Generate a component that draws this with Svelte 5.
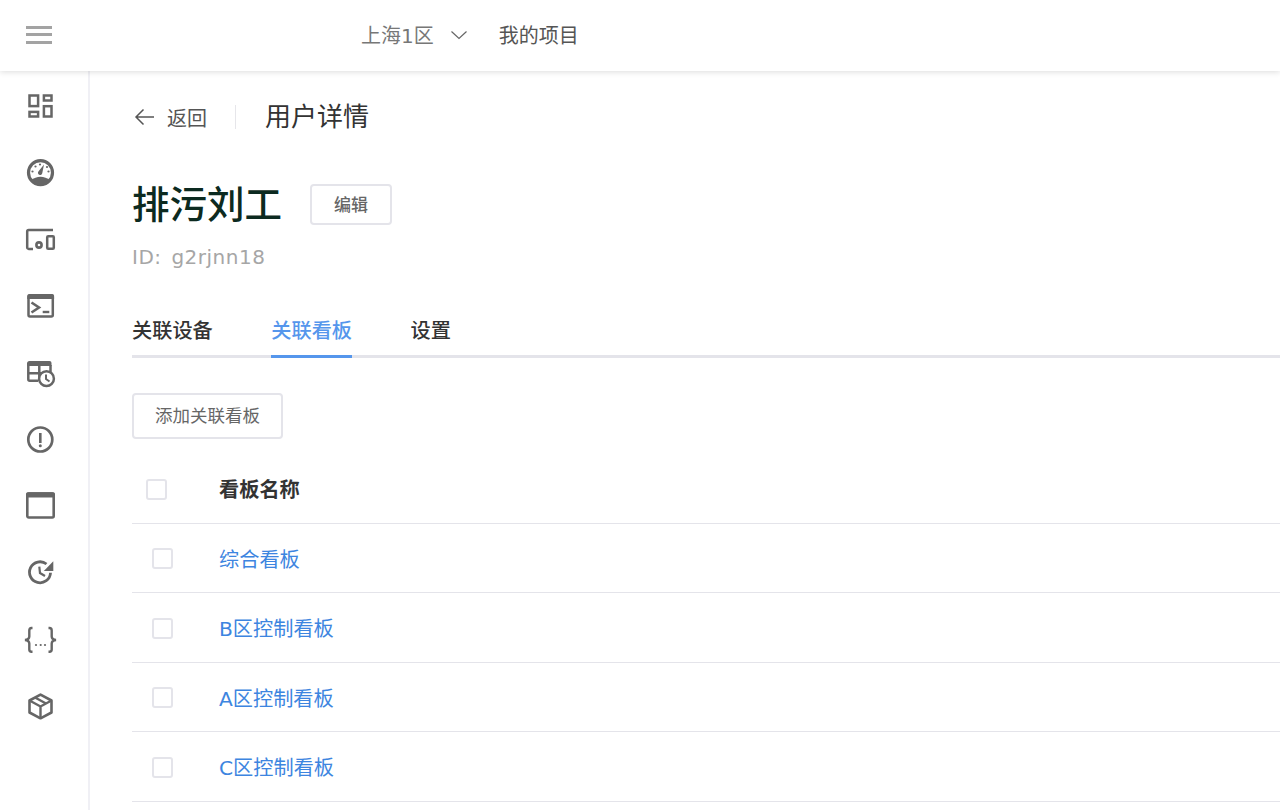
<script lang="ts">
	const boards = ['综合看板', 'B区控制看板', 'A区控制看板', 'C区控制看板'];
	const tabs = ['关联设备', '关联看板', '设置'];
	let activeTab = $state(1);
</script>

<div class="app">
	<header class="topbar">
		<button class="menu" aria-label="菜单">
			<span></span><span></span><span></span>
		</button>
		<div class="region">
			<span>上海1区</span>
			<svg width="18" height="10" viewBox="0 0 18 10" fill="none" stroke="#666" stroke-width="1.2"><path d="M1.500 1.500 9 8.500l7.500-7" /></svg>
		</div>
		<span class="project">我的项目</span>
	</header>

	<div class="body">
		<nav class="sidebar">
			<!-- dashboard -->
			<svg viewBox="0 0 32 32">
				<rect x="5.500" y="5.500" width="8.600" height="10.600" />
				<rect x="19.900" y="5.500" width="7.600" height="5" />
				<rect x="19.900" y="16.200" width="7.600" height="10.300" />
				<rect x="5.500" y="21.900" width="8.600" height="4.600" />
			</svg>
			<!-- gauge -->
			<svg viewBox="0 0 32 32">
				<circle cx="16.500" cy="15.700" r="12" stroke-width="3.200" />
				<path class="solid" d="M6.500 23.500Q16.500 16 26.500 23.500L22 28H11z" />
				<path class="solid" d="M20 7.500 18.300 16a2.200 2.200 0 1 1-3.900-1.600z" />
				<circle class="solid" cx="11.500" cy="9.500" r="1.100" />
				<circle class="solid" cx="8.500" cy="14.500" r="1.100" />
				<circle class="solid" cx="24.500" cy="14.500" r="1.100" />
				<circle class="solid" cx="23" cy="10" r="1.100" />
				<circle class="solid" cx="16" cy="7.500" r="1.100" />
			</svg>
			<!-- devices -->
			<svg viewBox="0 0 32 32">
				<path d="M29 5.900H4.700a1.500 1.500 0 0 0-1.500 1.500v16a1.500 1.500 0 0 0 1.500 1.500H9" />
				<rect x="23.200" y="12.200" width="6.600" height="12.600" rx="1" />
				<circle cx="15" cy="21" r="2.600" stroke-width="2.600" />
			</svg>
			<!-- terminal -->
			<svg viewBox="0 0 32 32">
				<rect x="4.500" y="5.500" width="24.300" height="21" rx="1.500" />
				<path class="solid" d="M3.300 6a2 2 0 0 1 2-2h22.800a2 2 0 0 1 2 2v3H3.300z" />
				<path d="M7.500 12.500 15 17.500l-7.500 5" stroke-width="2.600" />
				<path class="solid" d="M18.700 20.800h6.600v2.400h-6.600z" />
			</svg>
			<!-- table clock -->
			<svg viewBox="0 0 32 32">
				<path d="M14 23.800H5.800a1.500 1.500 0 0 1-1.500-1.500V5.500M26.500 8v8M4.500 16.300h22M15.300 8v16" />
				<path class="solid" d="M3.300 6a2 2 0 0 1 2-2h20.200a2 2 0 0 1 2 2v3H3.300z" />
				<circle class="clock" cx="22.500" cy="21.700" r="7.400" stroke-width="2.500" />
				<path d="M22 17.500v4.500l3.500 2.500" stroke-width="2" />
			</svg>
			<!-- alert -->
			<svg viewBox="0 0 32 32">
				<circle cx="16.300" cy="15.500" r="12" stroke-width="2.700" />
				<path class="solid" d="M15 9h2.600v10H15z" />
				<circle class="solid" cx="16.300" cy="21.700" r="1.500" />
			</svg>
			<!-- window -->
			<svg viewBox="0 0 32 32">
				<rect x="3.300" y="3.500" width="26.400" height="24" rx="1.500" stroke-width="2.600" />
				<path class="solid" d="M2 4.300a2 2 0 0 1 2-2h25a2 2 0 0 1 2 2v3.200H2z" />
			</svg>
			<!-- history -->
			<svg viewBox="0 0 32 32">
				<path d="M26.500 15.700A10.500 10.500 0 1 1 22.500 7" stroke-width="2.800" />
				<path class="solid" d="M29.300 4.200v9.800H19.800z" />
				<path d="M15.300 9.700 16 16l5 3" stroke-width="2.200" />
			</svg>
			<!-- braces -->
			<svg viewBox="0 0 32 32">
				<path d="M8.500 4H7.500Q5.300 4 5.300 6.500V12.500Q5.300 15.500 1 16 5.300 16.500 5.300 19.500V25.500Q5.300 27.700 7.500 27.700H8.500" stroke-width="2.400" />
				<path d="M24.500 4H25.500Q27.700 4 27.700 6.500V12.500Q27.700 15.500 32 16 27.700 16.500 27.700 19.500V25.500Q27.700 27.700 25.500 27.700H24.500" stroke-width="2.400" />
				<circle class="solid" cx="12" cy="21" r="1.100" />
				<circle class="solid" cx="16.700" cy="21" r="1.100" />
				<circle class="solid" cx="21" cy="21" r="1.100" />
			</svg>
			<!-- box -->
			<svg viewBox="0 0 32 32">
				<path d="M16.500 4.600 27.500 10.500V22.500L16.500 28.300 5.500 22.500V10.500z" stroke-linejoin="round" stroke-width="2.600" />
				<path d="M5.500 10.500 16.500 16.500 27.500 10.500M16.500 16.500V28M11 7.500 22 13.500" stroke-width="2.400" />
			</svg>
		</nav>

		<main class="content">
			<div class="crumbs">
				<a class="back" href="#back">
					<svg width="22" height="18" viewBox="0 0 22 18" fill="none" stroke="#555" stroke-width="1.500"><path d="M9.500 1.500 2 9l7.500 7.500M2 9h18" /></svg>
					<span>返回</span>
				</a>
				<i class="sep"></i>
				<span class="crumb-title">用户详情</span>
			</div>

			<div class="title-row">
				<h1>排污刘工</h1>
				<button class="btn edit">编辑</button>
			</div>
			<p class="id">ID: g2rjnn18</p>

			<div class="tabs">
				{#each tabs as tab, i}
					<button class="tab" class:active={activeTab === i} onclick={() => (activeTab = i)}>{tab}</button>
				{/each}
			</div>

			<button class="btn add">添加关联看板</button>

			<div class="table">
				<div class="row head">
					<span class="check"></span>
					<span class="name">看板名称</span>
				</div>
				{#each boards as board}
					<div class="row">
						<span class="check"></span>
						<a class="name" href="#board">{board}</a>
					</div>
				{/each}
			</div>
		</main>
	</div>
</div>

<style>
	:global(body) {
		margin: 0;
		background: #fff;
		font-family: 'DejaVu Sans', 'Noto Sans CJK SC', sans-serif;
		color: #333;
		overflow: hidden;
	}

	.app {
		height: 810px;
		display: flex;
		flex-direction: column;
		overflow: hidden;
	}

	.topbar {
		flex: none;
		height: 71px;
		box-sizing: border-box;
		padding-bottom: 2px;
		display: flex;
		align-items: center;
		position: relative;
		background: #fff;
		box-shadow: 0 1px 6px rgba(0, 0, 0, 0.14);
	}

	.menu {
		width: 26px;
		padding: 0;
		margin-left: 26px;
		display: grid;
		gap: 4.500px;
		border: 0;
		background: none;
	}

	.menu span {
		height: 3px;
		background: #a3a3a3;
	}

	.region {
		margin-left: 309px;
		display: flex;
		align-items: center;
		gap: 16px;
		font-size: 20px;
		color: #777;
	}

	.project {
		margin-left: 31px;
		font-size: 20px;
		color: #555;
	}

	.body {
		flex: 1;
		display: flex;
		min-height: 0;
	}

	.sidebar {
		flex: none;
		width: 90px;
		box-sizing: border-box;
		padding: 2px 8px 0 0;
		border-right: 2px solid #f0f0f5;
		display: grid;
		grid-auto-rows: 66.670px;
		justify-items: center;
		align-items: center;
	}

	.sidebar svg {
		width: 32px;
		height: 32px;
		overflow: visible;
		fill: none;
		stroke: #666;
		stroke-width: 2.500;
	}

	.sidebar .solid {
		fill: #666;
		stroke: none;
	}

	.sidebar .clock {
		fill: #fff;
	}

	.content {
		flex: 1;
		padding: 0 0 0 42px;
		min-width: 0;
	}

	.crumbs {
		height: 92px;
		display: flex;
		align-items: center;
	}

	.back {
		display: flex;
		align-items: center;
		gap: 11px;
		font-size: 20px;
		color: #555;
		text-decoration: none;
		margin-left: 2px;
	}

	.sep {
		width: 1px;
		height: 24px;
		margin: 0 29px 0 28px;
		background: #e6e6ea;
	}

	.crumb-title {
		font-size: 26px;
		line-height: 34px;
		color: #333;
	}

	.title-row {
		display: flex;
		align-items: center;
		gap: 28px;
		margin-top: 19px;
	}

	h1 {
		margin: 0;
		padding-top: 1px;
		font-size: 37.500px;
		line-height: 44px;
		font-weight: 500;
		color: #0c2a20;
	}

	.btn {
		box-sizing: border-box;
		font-family: inherit;
		background: #fff;
		border: 2px solid #e4e4ea;
		border-radius: 4px;
		color: #666;
	}

	.edit {
		width: 82px;
		height: 41px;
		margin-bottom: 1px;
		padding: 0 0 2px;
		font-size: 17px;
		font-weight: 500;
	}

	.id {
		margin: 16px 0 0;
		font-size: 20px;
		line-height: 28px;
		letter-spacing: 0.500px;
		word-spacing: 3px;
		color: #a6a6a6;
	}

	.tabs {
		display: flex;
		gap: 58.500px;
		margin-top: 37px;
		border-bottom: 3px solid #e4e4ea;
		height: 47px;
	}

	.tab {
		padding: 0 0 4px;
		height: 50px;
		box-sizing: border-box;
		border: 0;
		border-bottom: 3px solid transparent;
		background: none;
		font-family: inherit;
		font-size: 20.200px;
		font-weight: 500;
		color: #333;
	}

	.tab.active {
		color: #5596ec;
		border-bottom-color: #5596ec;
	}

	.add {
		display: block;
		width: 151px;
		height: 46px;
		margin-top: 35px;
		padding: 0 0 3px;
		font-size: 17.500px;
	}

	.table {
		margin-top: 16px;
	}

	.row {
		height: 69.500px;
		box-sizing: border-box;
		display: flex;
		align-items: center;
		border-bottom: 1px solid #e4e4ea;
	}

	.head {
		height: 68.800px;
	}

	.check {
		flex: none;
		width: 21px;
		height: 21px;
		box-sizing: border-box;
		margin: 1px 46px 0 20px;
		border: 2px solid #e4e4ea;
		border-radius: 3px;
		background: #fff;
	}

	.head .check {
		margin: 1px 52px 0 14px;
	}

	.name {
		font-size: 20.200px;
		color: #3d85e0;
		text-decoration: none;
	}

	.head .name {
		font-weight: 700;
		color: #333;
	}
</style>
